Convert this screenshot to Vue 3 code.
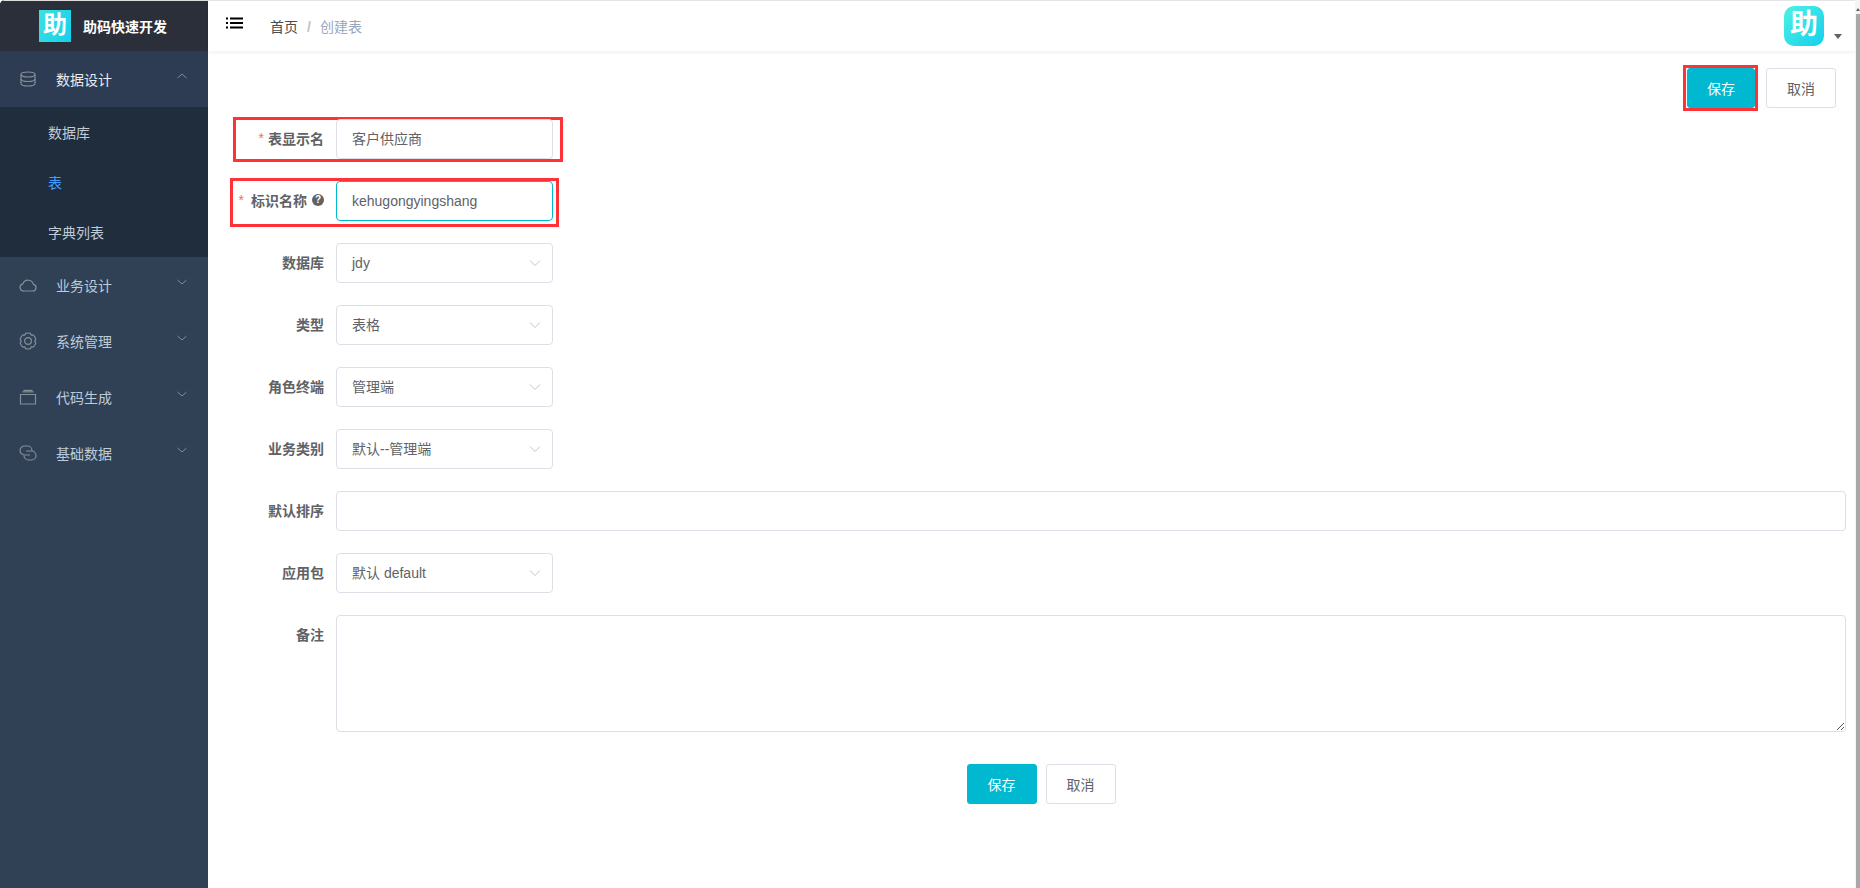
<template>
  <div class="app">
    <aside class="sidebar">
      <div class="brand">
        <span class="brand__logo">助</span>
        <span class="brand__name">助码快速开发</span>
      </div>
      <nav>
        <div v-for="item in menu" :key="item.name">
          <div class="menu-item" :class="{ 'menu-item--open': item.children }">
            <svg class="menu-item__icon" viewBox="0 0 18 18" fill="none" stroke="currentColor" stroke-width="1.2">
              <path v-for="(d, i) in item.icon" :key="i" :d="d" />
            </svg>
            <span class="menu-item__label">{{ item.name }}</span>
            <svg class="menu-item__arrow" viewBox="0 0 12 8" fill="none" stroke="currentColor" stroke-width="1">
              <path :d="item.children ? 'M1.5 6L6 2l4.5 4' : 'M1.5 2L6 6l4.5-4'" />
            </svg>
          </div>
          <div v-if="item.children" class="submenu">
            <div
              v-for="sub in item.children"
              :key="sub.name"
              class="submenu__item"
              :class="{ 'submenu__item--active': sub.active }"
            >{{ sub.name }}</div>
          </div>
        </div>
      </nav>
    </aside>

    <div class="main">
      <header class="topbar">
        <svg class="topbar__toggle" viewBox="0 0 18 12" fill="#000">
          <rect x="0" y="0.5" width="2" height="2" />
          <rect x="0" y="5" width="2" height="2" />
          <rect x="0" y="9.5" width="2" height="2" />
          <rect x="4" y="0.5" width="13" height="2" />
          <rect x="4" y="5" width="13" height="2" />
          <rect x="4" y="9.5" width="13" height="2" />
        </svg>
        <div class="crumbs">
          <span class="crumbs__link">首页</span>
          <span class="crumbs__sep">/</span>
          <span class="crumbs__current">创建表</span>
        </div>
        <div class="topbar__user">
          <span class="avatar">助</span>
          <span class="caret"></span>
        </div>
      </header>

      <section class="content">
        <div class="actions">
          <span class="mark mark--save">
            <button class="btn btn--primary">保存</button>
          </span>
          <button class="btn">取消</button>
        </div>

        <form class="form">
          <div v-for="row in rows" :key="row.label" class="row">
            <span v-if="row.mark" class="mark" :class="`mark--${row.mark}`"></span>
            <label class="row__label">
              <span v-if="row.required" class="row__star" :class="{ 'row__star--wide': row.help }">*</span>
              {{ row.label }}
              <span v-if="row.help" class="row__help">?</span>
            </label>
            <div
              v-if="!row.textarea"
              class="field"
              :class="{
                'field--short': !row.wide,
                'field--focus': row.focus,
                'field--latin': row.latin
              }"
            >
              <span class="field__value">{{ row.value }}</span>
              <svg v-if="row.select" class="field__arrow" viewBox="0 0 12 8" fill="none" stroke="currentColor" stroke-width="1">
                <path d="M1 1.500L6 6.500l5-5" />
              </svg>
            </div>
            <div v-else class="field field--area">
              <svg class="field__grip" viewBox="0 0 8 8" fill="none" stroke="#555" stroke-width="1">
                <path d="M1 8L8 1M5 8l3-3" />
              </svg>
            </div>
          </div>

          <div class="form__foot">
            <button class="btn btn--primary">保存</button>
            <button class="btn">取消</button>
          </div>
        </form>
      </section>
    </div>
    <div class="scrollbar"><div class="scrollbar__thumb"></div></div>
  </div>
</template>

<script setup>
// six rounded lobes around (9, 9), same outline as the settings icon
const gearPath = () => {
  const pt = (r, deg) => {
    const a = (deg * Math.PI) / 180
    return `${(9 + r * Math.cos(a)).toFixed(2)} ${(9 + r * Math.sin(a)).toFixed(2)}`
  }
  let d = ''
  for (let i = 0; i < 6; i++) {
    const c = i * 60 - 90
    d += `${i ? 'L' : 'M'}${pt(8, c - 17)}A8 8 0 0 1 ${pt(8, c + 17)}L${pt(6.7, c + 30)}`
  }
  return d + 'Z'
}

const menu = [
  {
    name: '数据设计',
    icon: [
      'M2 4.500C2 3 5.100 2 9 2s7 1 7 2.500S12.900 7 9 7 2 6 2 4.500z',
      'M2 4.500v9C2 15 5.100 16 9 16s7-1 7-2.500v-9',
      'M2 9c0 1.500 3.100 2.500 7 2.500s7-1 7-2.500'
    ],
    children: [{ name: '数据库' }, { name: '表', active: true }, { name: '字典列表' }]
  },
  {
    name: '业务设计',
    icon: ['M5 15h8.500a3.400 3.400 0 0 0 .9-6.700A5.500 5.500 0 0 0 3.900 7.900 3.600 3.600 0 0 0 5 15z']
  },
  {
    name: '系统管理',
    icon: [gearPath(), 'M9 5.600a3.400 3.400 0 1 0 0 6.800 3.400 3.400 0 0 0 0-6.800z']
  },
  {
    name: '代码生成',
    icon: ['M1.500 6.500h15v9.500h-15z', 'M3.500 3.800h11', 'M4.500 2.400h9']
  },
  {
    name: '基础数据',
    icon: [
      'M11 11H5.500a4.500 4.500 0 0 1 0-9h3a4.500 4.500 0 0 1 4.500 4.500',
      'M7 7h5.500a4.500 4.500 0 0 1 0 9h-3A4.500 4.500 0 0 1 5 11.500'
    ]
  }
]

const rows = [
  { label: '表显示名', required: true, value: '客户供应商', mark: 'name' },
  { label: '标识名称', required: true, help: true, value: 'kehugongyingshang', focus: true, latin: true, mark: 'code' },
  { label: '数据库', value: 'jdy', select: true, latin: true },
  { label: '类型', value: '表格', select: true },
  { label: '角色终端', value: '管理端', select: true },
  { label: '业务类别', value: '默认--管理端', select: true },
  { label: '默认排序', value: '', wide: true },
  { label: '应用包', value: '默认 default', select: true },
  { label: '备注', textarea: true, wide: true }
]
</script>

<style>
html,
body {
  margin: 0;
  background: #fff;
  overflow: hidden;
}
</style>

<style scoped>
* {
  box-sizing: border-box;
}

.app {
  display: flex;
  height: 888px;
  font-family: "Liberation Sans", "Noto Sans CJK SC", sans-serif;
  font-size: 14px;
  color: #606266;
}

.sidebar {
  flex: 0 0 208px;
  overflow: hidden;
  border-top-left-radius: 5px;
  background: #304156;
}

.brand {
  display: flex;
  align-items: center;
  gap: 12px;
  height: 51px;
  padding-left: 39px;
  border-top: 1px solid #dedee0;
  background: #2b2f3a;
}

.brand__logo {
  display: flex;
  align-items: center;
  justify-content: center;
  width: 32px;
  height: 32px;
  padding-bottom: 2px;
  background: linear-gradient(120deg, #3fe0e0, #14d0ec);
  color: #fff;
  font-size: 24px;
  font-weight: 700;
  line-height: 1;
}

.brand__name {
  color: #fff;
  font-weight: 700;
}

.menu-item {
  display: flex;
  align-items: center;
  height: 56px;
  padding-left: 19px;
  color: #bfcbd9;
}

.menu-item--open {
  background: #2d3c53;
}

.menu-item__icon {
  width: 18px;
  height: 18px;
  color: #868e98;
}

.menu-item__label {
  margin-left: 19px;
}

.menu-item--open .menu-item__label {
  color: #e6ebf1;
}

.menu-item__arrow {
  width: 12px;
  height: 8px;
  margin-left: auto;
  margin-right: 20px;
  margin-top: -6px;
  color: #7d8a9a;
}

.submenu {
  background: #1f2d3d;
}

.submenu__item {
  display: flex;
  align-items: center;
  height: 50px;
  padding-left: 48px;
  color: #bfcbd9;
}

.submenu__item--active {
  color: #409eff;
}

.main {
  flex: 1;
  min-width: 0;
}

.topbar {
  display: flex;
  align-items: center;
  height: 51px;
  padding-left: 18px;
  border-top: 1px solid #e4e4e6;
  box-shadow: 0 1px 4px rgba(0, 21, 41, 0.08);
}

.topbar__toggle {
  width: 18px;
  height: 12px;
  margin-top: -6px;
}

.crumbs {
  display: flex;
  align-items: center;
  gap: 9px;
  margin-left: 26px;
}

.crumbs__link {
  color: #4a4c50;
}

.crumbs__sep {
  padding-top: 2px;
  color: #c0c4cc;
  font-weight: 700;
}

.crumbs__current {
  color: #97a8be;
}

.topbar__user {
  display: flex;
  align-items: flex-end;
  gap: 10px;
  margin-left: auto;
  margin-right: 13px;
}

.avatar {
  display: flex;
  align-items: center;
  justify-content: center;
  width: 40px;
  height: 40px;
  padding-bottom: 2px;
  border-radius: 10px;
  background: linear-gradient(135deg, #4ff0e4, #14d0ec);
  color: #fff;
  font-size: 28px;
  font-weight: 700;
  line-height: 1;
}

.caret {
  width: 0;
  height: 0;
  margin-bottom: 7px;
  border: 4px solid transparent;
  border-top: 5px solid #606266;
  border-bottom: 0;
}

.content {
  position: relative;
  padding: 17px 9px 0 0;
}

.actions {
  display: flex;
  justify-content: flex-end;
  gap: 11px;
  padding-right: 10px;
}

.btn {
  width: 70px;
  height: 40px;
  padding: 0 0 1px;
  border: 1px solid #dcdfe6;
  border-radius: 3px;
  background: #fff;
  color: #606266;
  font: inherit;
}

.btn--primary {
  border-color: #00b9d0;
  background: #00b9d0;
  color: #fff;
}

.mark {
  position: absolute;
  border: 3px solid #ff3336;
  pointer-events: none;
}

.mark--save {
  position: static;
  display: block;
  margin: -3px -3px -3px 0;
  padding-left: 1px;
}

.mark--save .btn {
  display: block;
  width: 68px;
}

.mark--name {
  left: -25px;
  top: -2px;
  width: 330px;
  height: 45px;
}

.mark--code {
  left: -28px;
  top: -3px;
  width: 329px;
  height: 49px;
}

.form {
  padding-top: 11px;
}

.row {
  position: relative;
  display: flex;
  margin-bottom: 22px;
  margin-left: 50px;
}

.row__label {
  flex: 0 0 78px;
  min-width: 0;
  display: flex;
  align-items: center;
  justify-content: flex-end;
  height: 40px;
  padding: 0 12px 2px 0;
  color: #606266;
  font-weight: 700;
  white-space: nowrap;
}

.row__star {
  flex: none;
  margin-right: 4px;
  color: #f56c6c;
  font-weight: 400;
}

.row__star--wide {
  margin-right: 7px;
}

.row__help {
  flex: none;
  display: inline-flex;
  align-items: center;
  justify-content: center;
  width: 12px;
  height: 12px;
  margin-left: 5px;
  border-radius: 50%;
  background: #606266;
  color: #fff;
  font-size: 10px;
  line-height: 1;
}

.field {
  position: relative;
  flex: 1;
  display: flex;
  align-items: center;
  height: 40px;
  padding: 0 15px 2px;
  border: 1px solid #dcdfe6;
  border-radius: 4px;
  background: #fff;
  color: #606266;
}

.field--latin {
  padding-bottom: 0;
}

.field--short {
  flex: 0 0 217px;
}

.field--focus {
  border-color: #00b9d0;
}

.field--area {
  height: 117px;
}

.field__arrow {
  position: absolute;
  right: 11px;
  top: 15px;
  width: 12px;
  height: 8px;
  color: #c0c4cc;
}

.field__grip {
  position: absolute;
  right: 1px;
  bottom: 1px;
  width: 8px;
  height: 8px;
}

.form__foot {
  display: flex;
  justify-content: center;
  gap: 9px;
  padding-top: 10px;
  padding-left: 28px;
}

.scrollbar {
  position: relative;
  flex: 0 0 5px;
  padding: 14px 0 0 1px;
  background: #f4f4f4;
}

.scrollbar::before {
  content: "";
  position: absolute;
  left: 1px;
  top: 8px;
  border: 2px solid transparent;
  border-bottom: 3px solid #606060;
  border-top: 0;
}

.scrollbar__thumb {
  height: 100%;
  background: #a8a8a8;
}
</style>
